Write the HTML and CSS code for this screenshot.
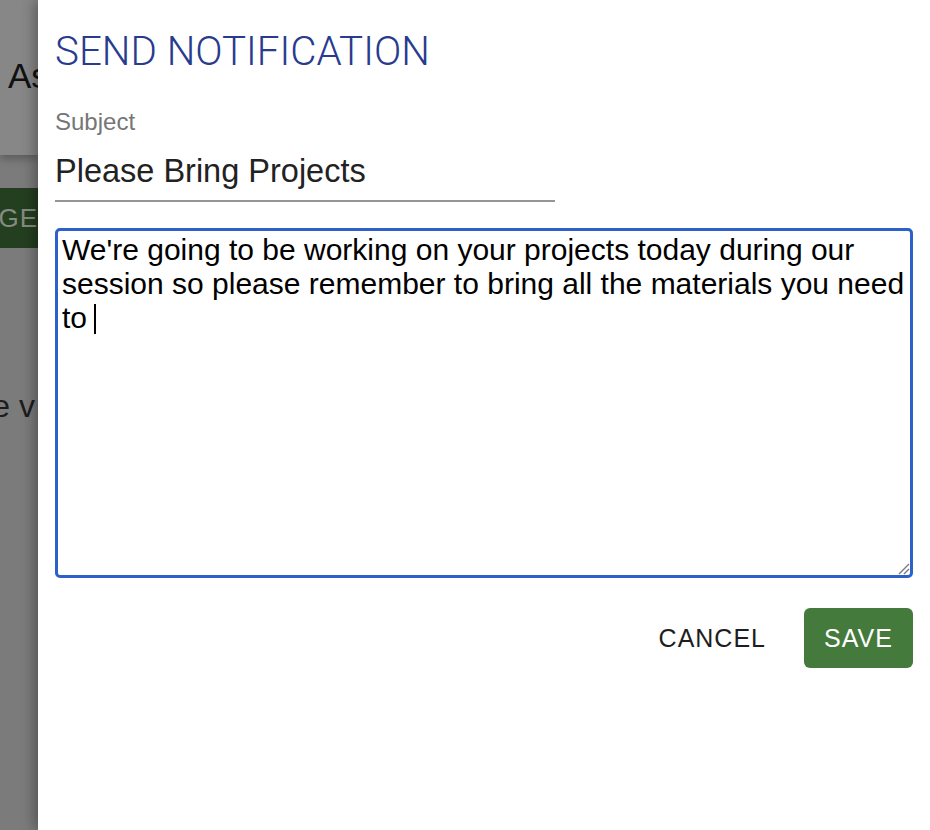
FILE: index.html
```html
<!DOCTYPE html>
<html lang="en">
<head>
<meta charset="utf-8">
<title>Send Notification</title>
<link rel="stylesheet" href="styles.css">
</head>
<body>
<div class="screen">
  <div class="backdrop">
    <div class="bd-header">
      <div class="bd-title">Ass</div>
    </div>
    <div class="bd-body">
      <div class="bd-row"><span class="bd-btn">MESSAGE</span></div>
      <div class="bd-row bd-text"><span>Please v</span></div>
    </div>
  </div>
  <div class="dialog">
    <h1 class="dialog-title">SEND NOTIFICATION</h1>
    <div class="field">
      <label class="field-label">Subject</label>
      <div class="field-input">Please Bring Projects</div>
    </div>
    <div class="message">
      <div class="message-text">We're going to be working on your projects today during our session so please remember to bring all the materials you need to <span class="caret"></span></div>
      <svg class="grip" width="14" height="14" viewBox="0 0 14 14"><path d="M13 3 L3 13 M13 8 L8 13" stroke="#7a7a7a" stroke-width="1.4" fill="none"/></svg>
    </div>
    <div class="actions">
      <button class="btn btn-text">CANCEL</button>
      <button class="btn btn-primary">SAVE</button>
    </div>
  </div>
</div>
</body>
</html>
```
FILE: styles.css
```css
html, body {
  margin: 0;
  padding: 0;
  height: 100%;
  overflow: hidden;
  background: #ffffff;
}

.screen {
  display: flex;
  width: 930px;
  height: 830px;
}

.backdrop {
  width: 38px;
  flex: 0 0 38px;
  overflow: hidden;
  background: #7b7b7b;
  font-family: "Liberation Sans", Arial, sans-serif;
}

.bd-header {
  height: 155px;
  background: #878787;
  box-shadow: 0 4px 8px rgba(0, 0, 0, 0.25);
  padding-top: 56px;
  box-sizing: border-box;
}

.bd-title {
  font-size: 35px;
  line-height: 40px;
  color: #111111;
  padding-left: 8px;
  white-space: nowrap;
}

.bd-body {
  padding-top: 33px;
}

.bd-row {
  display: flex;
  justify-content: flex-end;
  white-space: nowrap;
}

.bd-btn {
  flex: 0 0 auto;
  background: #243e20;
  color: #848c82;
  font-size: 26px;
  letter-spacing: 1px;
  height: 60px;
  line-height: 60px;
  padding-left: 20px;
  padding-right: 0;
}

.bd-text {
  margin-top: 140px;
  font-size: 32px;
  line-height: 36px;
  color: #1c1c1c;
  padding-right: 3px;
}

.bd-text span {
  flex: 0 0 auto;
}

.dialog {
  position: relative;
  z-index: 1;
  flex: 1 1 auto;
  background: #ffffff;
  box-shadow: -4px 0 12px rgba(0, 0, 0, 0.3);
  padding: 28px 17px 0 17px;
  box-sizing: border-box;
}

.dialog-title {
  margin: 0;
  font-family: Roboto, "Liberation Sans", sans-serif;
  font-weight: 300;
  font-size: 40.3px;
  line-height: 48px;
  color: #283b8e;
}

.field {
  margin-top: 32px;
  width: 500px;
}

.field-label {
  display: block;
  font-family: "Liberation Sans", Arial, sans-serif;
  font-size: 24px;
  line-height: 28px;
  color: #767676;
}

.field-input {
  margin-top: 16px;
  font-family: "Liberation Sans", Arial, sans-serif;
  font-size: 32.5px;
  line-height: 38px;
  color: #222222;
  padding-bottom: 10px;
  border-bottom: 2px solid #959595;
}

.message {
  position: relative;
  margin-top: 26px;
  height: 350px;
  border: 3px solid #2b61c8;
  border-radius: 5px;
  box-sizing: border-box;
  padding: 2px 4px;
}

.message-text {
  font-family: "Liberation Sans", Arial, sans-serif;
  font-size: 30px;
  line-height: 34px;
  color: #000000;
}

.caret {
  display: inline-block;
  width: 0;
  height: 30px;
  margin-left: -1px;
  border-left: 2px solid #000000;
  vertical-align: -6px;
}

.grip {
  position: absolute;
  right: 0;
  bottom: 0;
}

.actions {
  display: flex;
  justify-content: flex-end;
  gap: 18px;
  margin-top: 30px;
}

.btn {
  font-family: "Liberation Sans", Arial, sans-serif;
  font-size: 25px;
  letter-spacing: 1px;
  height: 60px;
  border: none;
  border-radius: 6px;
  padding: 0 20px;
  cursor: pointer;
}

.btn-text {
  background: transparent;
  color: #1d1d22;
}

.btn-primary {
  background: #457a3d;
  color: #ffffff;
  width: 109px;
  padding: 0;
}
```
